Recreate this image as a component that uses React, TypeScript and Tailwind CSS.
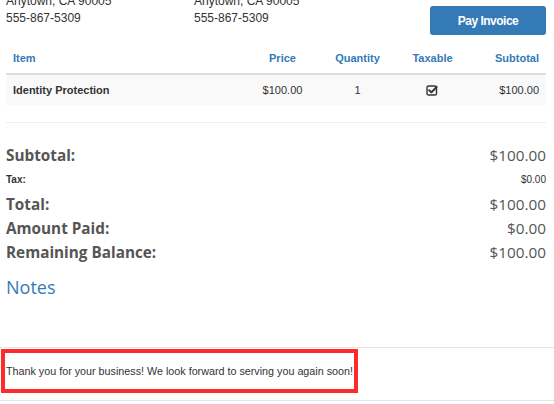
import React from "react";

const helv = { fontFamily: '"Liberation Sans", Arial, sans-serif' };

function CheckSquare() {
  return (
    <svg width="13" height="12" viewBox="0 0 13 12" className="block">
      <rect x="1" y="2" width="9.5" height="9" rx="1.6" fill="none" stroke="#333" strokeWidth="1.4" />
      <path d="M3.2 6.2 L5.4 8.4 L10.6 3.0" fill="none" stroke="#333" strokeWidth="2" strokeLinecap="round" strokeLinejoin="round" />
    </svg>
  );
}

export default function App() {
  return (
    <div className="w-[554px] h-[404px] overflow-hidden bg-white text-[#333]" style={helv}>
      <div className="pl-[6px] pr-[8px]">
        <div className="flex items-start">
          <div className="w-[188px] -mt-[7px] text-[12px] leading-[17px] font-['Liberation_Sans',Arial,sans-serif]">
            <div>Anytown, CA 90005</div>
            <div>555-867-5309</div>
          </div>
          <div className="-mt-[7px] text-[12px] leading-[17px] font-['Liberation_Sans',Arial,sans-serif]">
            <div>Anytown, CA 90005</div>
            <div>555-867-5309</div>
          </div>
          <button className="ml-auto mt-[6px] w-[116px] h-[29px] rounded-[3px] bg-[#337ab7] text-white text-[12px] font-bold tracking-[-0.5px] font-['Liberation_Sans',Arial,sans-serif]">
            Pay Invoice
          </button>
        </div>

        <div className="mt-[8px] text-[11px] font-['Liberation_Sans',Arial,sans-serif]">
          <div className="grid grid-cols-[239px_75px_75px_75px_76px] h-[30px] items-center border-b-2 border-[#ddd] font-bold text-[#337ab7] box-content">
            <div className="pl-[7px]">Item</div>
            <div className="text-center">Price</div>
            <div className="text-center">Quantity</div>
            <div className="text-center">Taxable</div>
            <div className="text-right pr-[7px]">Subtotal</div>
          </div>
          <div className="grid grid-cols-[239px_75px_75px_75px_76px] h-[30px] items-center bg-[#f9f9f9]">
            <div className="pl-[7px] font-bold">Identity Protection</div>
            <div className="text-center">$100.00</div>
            <div className="text-center">1</div>
            <div className="flex justify-center"><CheckSquare /></div>
            <div className="text-right pr-[7px]">$100.00</div>
          </div>
        </div>

        <div className="mt-[17px] border-t border-[#eee]" />

        <div className="mt-[20px] text-[#555]">
          <div className="flex justify-between items-center h-[24px] text-[15.3px] font-['Open_Sans',sans-serif]">
            <span className="font-bold">Subtotal:</span>
            <span>$100.00</span>
          </div>
          <div className="flex justify-between items-center h-[25px] text-[10px] text-[#333] font-['Liberation_Sans',Arial,sans-serif]">
            <span className="font-bold">Tax:</span>
            <span>$0.00</span>
          </div>
          <div className="flex justify-between items-center h-[24px] text-[15.3px] font-['Open_Sans',sans-serif]">
            <span className="font-bold">Total:</span>
            <span>$100.00</span>
          </div>
          <div className="flex justify-between items-center h-[24px] text-[15.3px] font-['Open_Sans',sans-serif]">
            <span className="font-bold">Amount Paid:</span>
            <span>$0.00</span>
          </div>
          <div className="flex justify-between items-center h-[24px] text-[15.3px] font-['Open_Sans',sans-serif]">
            <span className="font-bold">Remaining Balance:</span>
            <span>$100.00</span>
          </div>
        </div>

        <div className="mt-[11px] h-[24px] leading-[24px] text-[18px] text-[#337ab7] font-['Open_Sans',sans-serif]">
          Notes
        </div>
      </div>

      <div className="mt-[48px] border-t border-[#e5e5e5]" />
      <div className="ml-[1px] mt-[1px] w-[357px] h-[44px] border-4 border-[#ff2a2a] flex items-center pl-[1px] whitespace-nowrap text-[10.75px] text-[#333] font-['Liberation_Sans',Arial,sans-serif]">
        Thank you for your business! We look forward to serving you again soon!
      </div>
      <div className="mt-[7px] border-t border-[#e5e5e5]" />
    </div>
  );
}
